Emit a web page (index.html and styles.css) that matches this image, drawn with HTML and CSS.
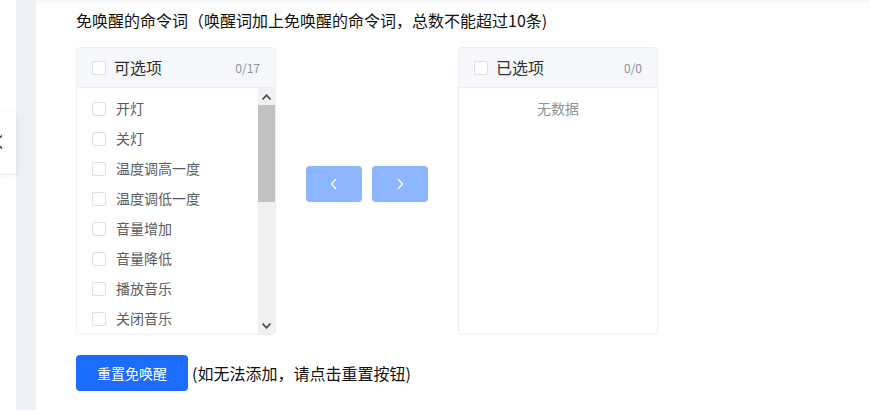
FILE: index.html
```html
<!DOCTYPE html>
<html lang="zh">
<head>
<meta charset="utf-8">
<link rel="stylesheet" href="styles.css">
</head>
<body>
<div class="side">
  <div class="float-tab">
    <svg class="tab-chev" width="10" height="16" viewBox="0 0 10 16"><path d="M8 1.5 L1.5 8 L8 14.5" fill="none" stroke="#333" stroke-width="1.3"/></svg>
  </div>
</div>
<div class="gutter"></div>
<div class="main">
  <div class="title">免唤醒的命令词（唤醒词加上免唤醒的命令词，总数不能超过10条)</div>
  <div class="transfer">
    <div class="panel">
      <div class="panel-head">
        <span class="cb"></span>
        <span class="head-label">可选项</span>
        <span class="count">0/17</span>
      </div>
      <div class="panel-body scroll-body">
        <div class="list">
          <div class="item"><span class="cb"></span><span class="item-label">开灯</span></div>
          <div class="item"><span class="cb"></span><span class="item-label">关灯</span></div>
          <div class="item"><span class="cb"></span><span class="item-label">温度调高一度</span></div>
          <div class="item"><span class="cb"></span><span class="item-label">温度调低一度</span></div>
          <div class="item"><span class="cb"></span><span class="item-label">音量增加</span></div>
          <div class="item"><span class="cb"></span><span class="item-label">音量降低</span></div>
          <div class="item"><span class="cb"></span><span class="item-label">播放音乐</span></div>
          <div class="item"><span class="cb"></span><span class="item-label">关闭音乐</span></div>
        </div>
        <div class="scrollbar">
          <div class="sb-btn"><svg width="9" height="6" viewBox="0 0 9 6"><path d="M0.5 5.5 L4.5 1.2 L8.5 5.5" fill="none" stroke="#505050" stroke-width="1.8"/></svg></div>
          <div class="sb-track"><div class="sb-thumb"></div></div>
          <div class="sb-btn"><svg width="9" height="6" viewBox="0 0 9 6"><path d="M0.5 0.5 L4.5 4.8 L8.5 0.5" fill="none" stroke="#505050" stroke-width="1.8"/></svg></div>
        </div>
      </div>
    </div>
    <div class="buttons">
      <button class="arrow-btn"><svg width="8" height="12" viewBox="0 0 8 12"><path d="M6 1 L1.5 6 L6 11" fill="none" stroke="#fff" stroke-width="1.3"/></svg></button>
      <button class="arrow-btn"><svg width="8" height="12" viewBox="0 0 8 12"><path d="M2 1 L6.5 6 L2 11" fill="none" stroke="#fff" stroke-width="1.3"/></svg></button>
    </div>
    <div class="panel">
      <div class="panel-head">
        <span class="cb"></span>
        <span class="head-label">已选项</span>
        <span class="count">0/0</span>
      </div>
      <div class="panel-body">
        <div class="empty">无数据</div>
      </div>
    </div>
  </div>
  <div class="actions">
    <button class="primary-btn">重置免唤醒</button>
    <span class="hint">(如无法添加，请点击重置按钮)</span>
  </div>
</div>
</body>
</html>
```
FILE: styles.css
```css
* { box-sizing: border-box; }
html, body { margin: 0; height: 100%; }
body {
  display: flex;
  overflow: hidden;
  background: #fff;
  font-family: "Noto Sans CJK SC", "Noto Sans", sans-serif;
  color: #1a1a1a;
}
.side {
  width: 16px;
  flex: none;
  position: relative;
  background: #fff;
  z-index: 2;
}
.float-tab {
  position: absolute;
  left: -24px;
  top: 112px;
  width: 40px;
  height: 61px;
  background: #fff;
  box-shadow: 0 2px 6px rgba(0,0,0,0.08);
}
.tab-chev {
  position: absolute;
  left: 18px;
  top: 22px;
}
.gutter {
  width: 20px;
  flex: none;
  background: #eef0f6;
}
.main {
  flex: 1;
  padding: 9px 0 0 40px;
  box-shadow: inset 0 4px 4px -3px rgba(0,0,0,0.07);
}
.title {
  font-size: 16px;
  line-height: 22px;
  height: 22px;
  color: #111;
}
.transfer {
  display: flex;
  align-items: flex-start;
  margin-top: 16px;
}
.panel {
  width: 200px;
  height: 288px;
  border: 1px solid #ebeef5;
  border-radius: 4px;
  overflow: hidden;
  background: #fff;
}
.panel-head {
  height: 40px;
  background: #f5f7fa;
  border-bottom: 1px solid #ebeef5;
  display: flex;
  align-items: center;
  padding: 0 15px;
}
.cb {
  width: 14px;
  height: 14px;
  flex: none;
  border: 1px solid #dcdfe6;
  border-radius: 2px;
  background: #fff;
}
.head-label {
  font-size: 16px;
  line-height: 20px;
  color: #303133;
  margin: -1px 0 0 8px;
  flex: 1;
}
.count {
  font-size: 12px;
  color: #909399;
}
.panel-body {
  height: 246px;
}
.scroll-body {
  display: flex;
}
.list {
  flex: 1;
  overflow: hidden;
  padding: 5px 0 0;
}
.item {
  height: 30px;
  display: flex;
  align-items: center;
  padding-left: 15px;
}
.item .cb {
  margin-top: 2px;
}
.item-label {
  font-size: 14px;
  line-height: 20px;
  color: #5a5c61;
  margin-left: 10px;
}
.scrollbar {
  width: 17px;
  flex: none;
  display: flex;
  flex-direction: column;
  background: #f1f1f1;
}
.sb-btn {
  height: 17px;
  flex: none;
  display: flex;
  align-items: center;
  justify-content: center;
}
.sb-track {
  flex: 1;
}
.sb-thumb {
  height: 97px;
  background: #c1c1c1;
}
.empty {
  padding-top: 5px;
  line-height: 30px;
  height: 36px;
  text-align: center;
  font-size: 14px;
  color: #909399;
}
.buttons {
  display: flex;
  gap: 10px;
  margin: 119px 30px 0;
}
.arrow-btn {
  width: 56px;
  height: 36px;
  border: none;
  border-radius: 4px;
  background: #8cb6ff;
  display: flex;
  align-items: center;
  justify-content: center;
  padding: 0;
}
.actions {
  display: flex;
  align-items: center;
  margin-top: 20px;
}
.primary-btn {
  width: 112px;
  height: 36px;
  border: none;
  border-radius: 4px;
  background: #1a6dff;
  color: #fff;
  font-family: inherit;
  font-size: 14px;
  padding: 0;
}
.hint {
  font-size: 16px;
  color: #111;
  margin-left: 4px;
  line-height: 22px;
}
```
